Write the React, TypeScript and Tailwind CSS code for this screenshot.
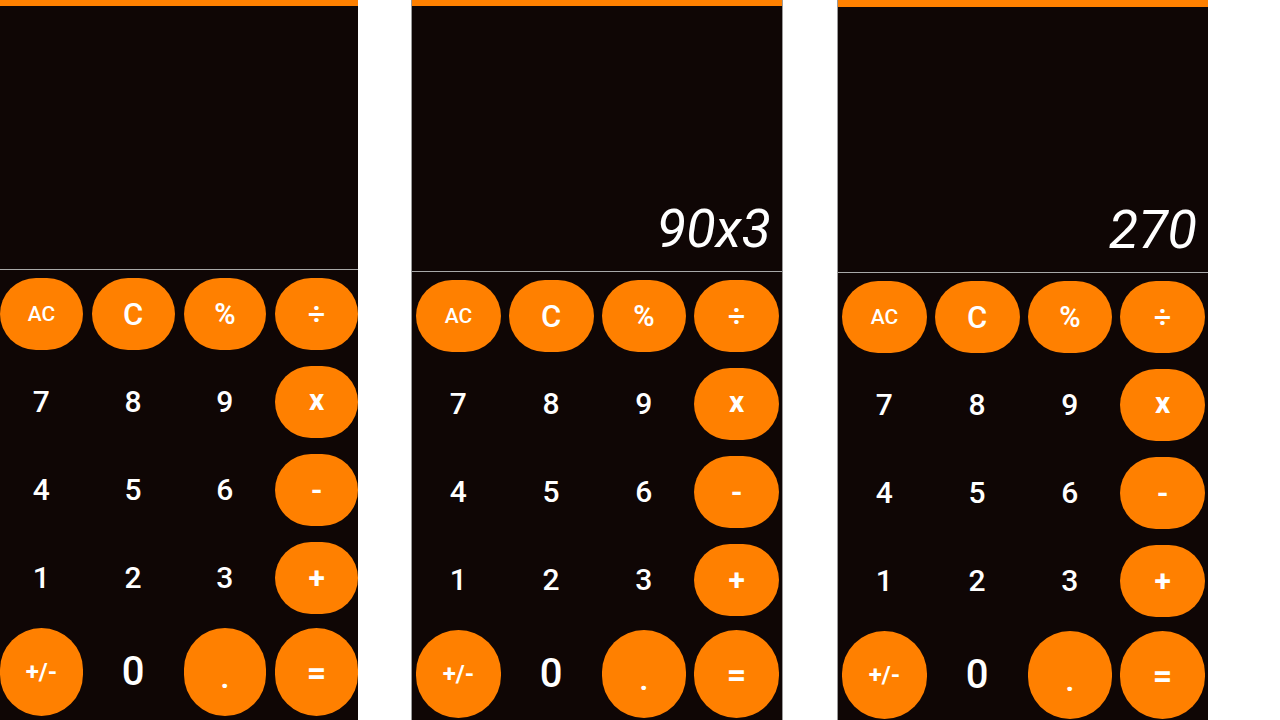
import React from "react";

type PanelProps = {
  width: string;
  displayH: string;
  padX: string;
  gapX: string;
  value?: string;
  border?: string;
  bar: string;
};

const keys: { label: string; kind: "op" | "num" }[][] = [
  [
    { label: "AC", kind: "op" },
    { label: "C", kind: "op" },
    { label: "%", kind: "op" },
    { label: "÷", kind: "op" },
  ],
  [
    { label: "7", kind: "num" },
    { label: "8", kind: "num" },
    { label: "9", kind: "num" },
    { label: "x", kind: "op" },
  ],
  [
    { label: "4", kind: "num" },
    { label: "5", kind: "num" },
    { label: "6", kind: "num" },
    { label: "-", kind: "op" },
  ],
  [
    { label: "1", kind: "num" },
    { label: "2", kind: "num" },
    { label: "3", kind: "num" },
    { label: "+", kind: "op" },
  ],
  [
    { label: "+/-", kind: "op" },
    { label: "0", kind: "num" },
    { label: ".", kind: "op" },
    { label: "=", kind: "op" },
  ],
];

function labelClass(label: string, last: boolean) {
  if (label === "AC") return "text-[21px] font-medium";
  if (label === "C") return "text-[31px] font-medium";
  if (label === "%") return "text-[29px] font-semibold";
  if (label === "÷") return "text-[30px] font-semibold";
  if (label === "x") return "text-[30px] font-bold pb-[4px]";
  if (label === "-") return "text-[30px] font-bold";
  if (label === "+") return "text-[30px] font-bold";
  if (label === "+/-") return "text-[24px] font-bold";
  if (label === ".") return "text-[30px] font-bold pt-[12px]";
  if (label === "=") return "text-[34px] font-bold";
  if (last) return "text-[40px] font-medium";
  return "text-[30px] font-medium";
}

function Panel({ width, displayH, padX, gapX, value, border, bar }: PanelProps) {
  return (
    <div className={`${width} ${border ?? ""} h-[720px] shrink-0 bg-[#0f0605] flex flex-col overflow-hidden`}>
      <div className={`${bar} bg-[#ff8000] shrink-0`} />
      <div className={`${displayH} shrink-0 flex items-end justify-end pr-[11px] pb-[15px]`}>
        {value && (
          <span className="text-white italic text-[54px] leading-none" style={{ fontFamily: "Roboto, 'Noto Sans', sans-serif" }}>
            {value}
          </span>
        )}
      </div>
      <div className="h-px bg-[#a8a8a8] shrink-0" />
      <div
        className={`grid grid-cols-4 ${padX} ${gapX} pt-[8px] gap-y-[16px] grid-rows-[72px_72px_72px_72px_86px]`}
        style={{ fontFamily: "Roboto, 'Noto Sans', sans-serif" }}
      >
        {keys.map((row, ri) =>
          row.map((k, ci) => {
            const last = ri === 4;
            const cls = labelClass(k.label, last);
            return (
              <div
                key={`${ri}-${ci}`}
                className={`flex items-center justify-center text-white ${
                  k.kind === "op" ? "bg-[#ff8000] rounded-full" : ""
                } ${last ? "-mt-[2px]" : ""}`}
              >
                <span className={`${cls} leading-none`}>{k.label}</span>
              </div>
            );
          })
        )}
      </div>
    </div>
  );
}

export default function App() {
  return (
    <div className="w-[1280px] h-[720px] bg-white flex overflow-hidden">
      <Panel width="w-[358px]" displayH="h-[263px]" padX="px-0" gapX="gap-x-[9px]" bar="h-[6px]" />
      <div className="w-[53px] shrink-0" />
      <Panel
        width="w-[372px]"
        displayH="h-[265px]"
        padX="pl-[4px] pr-[3px]"
        gapX="gap-x-[8px]"
        value="90x3"
        border="border-x border-[#9a9a9a]"
        bar="h-[6px]"
      />
      <div className="w-[54px] shrink-0" />
      <Panel
        width="w-[371px]"
        displayH="h-[265px]"
        padX="pl-[4px] pr-[3px]"
        gapX="gap-x-[8px]"
        value="270"
        border="border-l border-[#9a9a9a]"
        bar="h-[7px]"
      />
    </div>
  );
}
